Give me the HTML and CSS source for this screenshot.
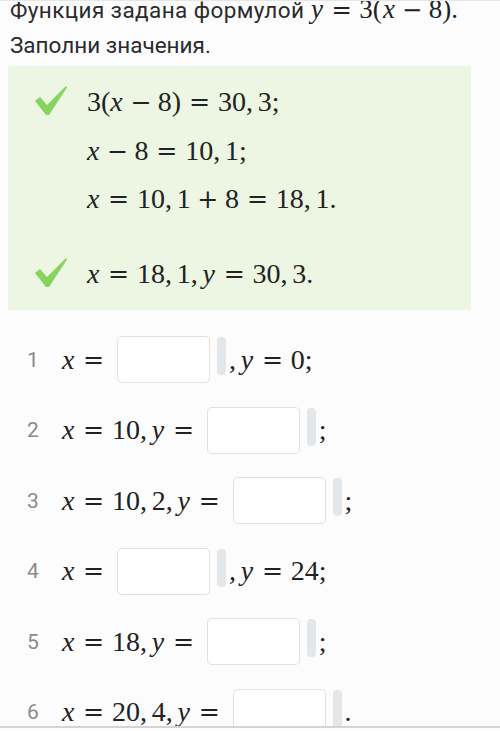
FILE: index.html
```html
<!DOCTYPE html>
<html lang="ru">
<head>
<meta charset="utf-8">
<link rel="stylesheet" href="styles.css">
</head>
<body>
<div class="page">
  <p class="task"><span class="lead">Функция задана формулой</span> <span class="math title-math"><i>y</i><b class="rel">=</b>3(<i>x</i><b class="bin">−</b>8).</span><br>Заполни значения.</p>

  <div class="solution">
    <div class="step">
      <svg class="check" viewBox="0 0 32 29"><path d="M0 15 L5 11 L12 19 L31 0 L32 1.5 L14 29 L11 29 Z"/></svg>
      <div class="lines">
        <div class="math line">3(<i>x</i><b class="bin">−</b>8)<b class="rel">=</b>30<span class="punct">,</span>3;</div>
        <div class="math line"><i>x</i><b class="bin">−</b>8<b class="rel">=</b>10<span class="punct">,</span>1;</div>
        <div class="math line"><i>x</i><b class="rel">=</b>10<span class="punct">,</span>1<b class="bin">+</b>8<b class="rel">=</b>18<span class="punct">,</span>1.</div>
      </div>
    </div>
    <div class="step step-answer">
      <svg class="check" viewBox="0 0 32 29"><path d="M0 15 L5 11 L12 19 L31 0 L32 1.5 L14 29 L11 29 Z"/></svg>
      <div class="lines">
        <div class="math line"><i>x</i><b class="rel">=</b>18<span class="punct">,</span>1<span class="punct">,</span><i>y</i><b class="rel">=</b>30<span class="punct">,</span>3.</div>
      </div>
    </div>
  </div>

  <ol class="rows">
    <li class="row"><span class="num">1</span><span class="math"><i>x</i><b class="rel">=</b></span><span class="field"></span><span class="handle"></span><span class="math after"><span class="punct">,</span><i>y</i><b class="rel">=</b>0;</span></li>
    <li class="row"><span class="num">2</span><span class="math"><i>x</i><b class="rel">=</b>10<span class="punct">,</span><i>y</i><b class="rel">=</b></span><span class="field"></span><span class="handle"></span><span class="math after">;</span></li>
    <li class="row"><span class="num">3</span><span class="math"><i>x</i><b class="rel">=</b>10<span class="punct">,</span>2<span class="punct">,</span><i>y</i><b class="rel">=</b></span><span class="field"></span><span class="handle"></span><span class="math after">;</span></li>
    <li class="row"><span class="num">4</span><span class="math"><i>x</i><b class="rel">=</b></span><span class="field"></span><span class="handle"></span><span class="math after"><span class="punct">,</span><i>y</i><b class="rel">=</b>24;</span></li>
    <li class="row"><span class="num">5</span><span class="math"><i>x</i><b class="rel">=</b>18<span class="punct">,</span><i>y</i><b class="rel">=</b></span><span class="field"></span><span class="handle"></span><span class="math after">;</span></li>
    <li class="row"><span class="num">6</span><span class="math"><i>x</i><b class="rel">=</b>20<span class="punct">,</span>4<span class="punct">,</span><i>y</i><b class="rel">=</b></span><span class="field"></span><span class="handle"></span><span class="math after">.</span></li>
  </ol>
</div>
</body>
</html>
```
FILE: styles.css
```css
html, body {
  margin: 0;
  padding: 0;
  background: #fcfcfc;
}
.page {
  height: 728px;
  overflow: hidden;
  border-bottom: 2px solid #d4d4d4;
  border-top: 1px solid #e6e6e6;
  box-sizing: border-box;
  font-family: Roboto, "Noto Sans", sans-serif;
  color: #2b2b2b;
}
.task {
  margin: -9px 0 0 10px;
  font-size: 22.5px;
  line-height: 35px;
}
.lead {
  letter-spacing: 0.4px;
}
.math {
  font-family: "Liberation Serif", "DejaVu Serif", serif;
  font-size: 28px;
  color: #222;
  white-space: nowrap;
}
.title-math {
  font-size: 27px;
}
.title-math .rel {
  margin: 0 0.4em;
}
.title-math .bin {
  margin: 0 0.35em;
}
.title-math i {
  padding: 0 0.04em;
}
.math i {
  font-style: italic;
  padding-right: 0.03em;
}
.math b {
  font-weight: normal;
  display: inline-block;
  text-align: center;
  font-family: "DejaVu Serif", serif;
  font-size: 0.9em;
}
.math .rel {
  width: 0.86em;
  margin: 0 0.3em;
}
.math .bin {
  width: 0.86em;
  margin: 0 0.25em;
}
.math .punct {
  margin-right: 0.17em;
}
.solution {
  margin: 3px 0 0 8px;
  width: 463px;
  background: #edf5e3;
  padding: 12px 0 12px 27px;
  box-sizing: border-box;
}
.step {
  display: flex;
  align-items: flex-start;
}
.step-answer {
  margin-top: 26px;
}
.check {
  width: 32px;
  height: 29px;
  margin-top: 8px;
  margin-right: 20px;
  flex: none;
  fill: #86d35e;
}
.line {
  line-height: 47.5px;
}
.rows {
  list-style: none;
  margin: 26px 0 0 0;
  padding: 0 0 0 27px;
  display: flex;
  flex-direction: column;
  gap: 23.6px;
}
.row {
  display: flex;
  align-items: center;
  height: 47px;
}
.num {
  width: 35px;
  flex: none;
  font-size: 21px;
  color: #8a8a8a;
}
.field {
  flex: none;
  width: 93px;
  height: 47px;
  box-sizing: border-box;
  background: #fff;
  border: 1.5px solid #e1e1e1;
  border-radius: 5px;
  margin-left: 5px;
}
.handle {
  flex: none;
  align-self: flex-start;
  width: 9px;
  height: 38px;
  margin: 1px 0 0 7px;
  border-radius: 4px;
  background: #e4e7e9;
}
.after {
  margin-left: 3px;
}
```
